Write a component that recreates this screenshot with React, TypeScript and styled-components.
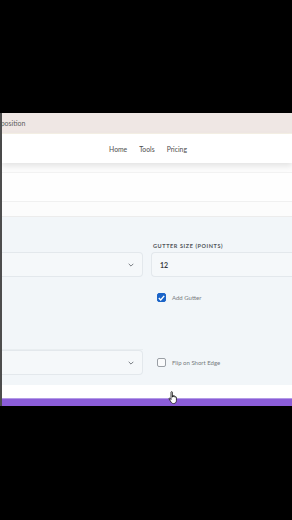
import styled, { createGlobalStyle } from "styled-components";

const GlobalStyle = createGlobalStyle`
  html, body {
    margin: 0;
    padding: 0;
    background: #000;
  }
  body {
    font-family: "Lato", "Open Sans", sans-serif;
  }
`;

const Screen = styled.div`
  width: 292px;
  height: 520px;
  background: #000;
  overflow: hidden;
  display: flex;
  flex-direction: column;
  padding-top: 113px;
  box-sizing: border-box;
`;

const Frame = styled.div`
  position: relative;
  display: flex;
  flex-direction: column;
  border-left: 2px solid #4d4d4d;
  background: #fff;
`;

const TitleStrip = styled.div`
  height: 20px;
  background: #efe7e4;
  border-bottom: 1px solid #f6f1e6;
  display: flex;
  align-items: center;
  overflow: hidden;
  font-size: 7px;
  color: #5e5e5e;
`;

const TitleText = styled.span`
  margin-left: -9px;
`;

const Header = styled.header`
  height: 29px;
  background: #fff;
  display: flex;
  justify-content: center;
  align-items: center;
  gap: 12px;
  padding-left: 2px;
  box-shadow: 0 3px 6px rgba(0, 0, 0, 0.1);
  position: relative;
  z-index: 1;
`;

const NavLink = styled.a`
  font-size: 6.8px;
  color: #4d4d4d;
  text-decoration: none;
`;

const Banner = styled.section`
  height: 54px;
  background: #fcfcfc;
  border-bottom: 1px solid #ececec;
  padding-top: 9px;
  box-sizing: border-box;
`;

const FaintBox = styled.div`
  height: 28px;
  border-top: 1px solid #f2f2f2;
  border-bottom: 1px solid #f0f0f0;
  background: #fefefe;
`;

const Panel = styled.section`
  background: #f2f6f9;
  padding: 26px 0 10px 0;
  display: grid;
  grid-template-columns: 141px 1fr;
  grid-template-rows: 9px 25px 41px 32px 25px;
  column-gap: 8px;
`;

const Label = styled.div`
  grid-column: 2;
  font-size: 5.5px;
  font-weight: 700;
  letter-spacing: 0.6px;
  color: #4f5358;
  padding-left: 2px;
`;

const Select = styled.div`
  background: #f5f8fa;
  border: 1px solid #e3e8ec;
  border-left: none;
  border-radius: 0 4px 4px 0;
  display: flex;
  justify-content: flex-end;
  align-items: center;
  padding-right: 8px;
`;

const Input = styled.div`
  background: #f5f8fa;
  border: 1px solid #e3e8ec;
  border-right: none;
  border-radius: 4px 0 0 4px;
  display: flex;
  align-items: center;
  padding-left: 8px;
  font-size: 7px;
  font-weight: 700;
  color: #3a3d41;
`;

const Spacer = styled.div``;

const CheckRow = styled.label`
  grid-column: 2;
  display: flex;
  align-items: center;
  gap: 6px;
  padding-left: 6px;
  font-size: 6px;
  color: #777b80;
`;

const Box = styled.span<{ $checked?: boolean }>`
  width: 9px;
  height: 9px;
  box-sizing: border-box;
  border-radius: 2px;
  border: 1px solid ${(p) => (p.$checked ? "#1b64c8" : "#9a9fa5")};
  background: ${(p) => (p.$checked ? "#1b64c8" : "#fafbfc")};
  display: flex;
  align-items: center;
  justify-content: center;
`;

const FaintCell = styled.div`
  border-bottom: 1px solid #e9eef1;
`;

const BottomStrip = styled.div`
  height: 13px;
  background: #fff;
`;

const Accent = styled.div`
  height: 7px;
  background: #8b5dd8;
  border-top: 1px solid #b39ae6;
`;

const Cursor = styled.svg`
  position: absolute;
  left: 166px;
  top: 278px;
`;

const Chevron = () => (
  <svg width="6" height="4" viewBox="0 0 6 4">
    <path d="M0.7 0.8 L3 3.1 L5.3 0.8" fill="none" stroke="#6c7177" strokeWidth="0.9" />
  </svg>
);

const Tick = () => (
  <svg width="7" height="6" viewBox="0 0 7 6">
    <path d="M0.8 3.1 L2.7 5 L6.2 0.9" fill="none" stroke="#fff" strokeWidth="1.4" />
  </svg>
);

function App() {
  return (
    <>
      <GlobalStyle />
      <Screen>
        <Frame>
          <TitleStrip>
            <TitleText>Imposition</TitleText>
          </TitleStrip>
          <Header>
            <NavLink>Home</NavLink>
            <NavLink>Tools</NavLink>
            <NavLink>Pricing</NavLink>
          </Header>
          <Banner>
            <FaintBox />
          </Banner>
          <Panel>
            <Label>GUTTER SIZE (POINTS)</Label>
            <Select>
              <Chevron />
            </Select>
            <Input>12</Input>
            <CheckRow>
              <Box $checked>
                <Tick />
              </Box>
              Add Gutter
            </CheckRow>
            <FaintCell />
            <Spacer />
            <Select>
              <Chevron />
            </Select>
            <CheckRow>
              <Box />
              Flip on Short Edge
            </CheckRow>
          </Panel>
          <BottomStrip />
          <Accent />
          <Cursor width="11" height="14" viewBox="0 0 11 14">
            <path
              d="M3 1.2c0-.7 1.4-.7 1.4 0v5l.1-1.2c0-.7 1.3-.7 1.3 0v1l.1-.6c0-.7 1.3-.7 1.3 0v.9c0-.6 1.2-.6 1.2 0v3.4c0 1.5-1 2.8-2.6 2.8H5.4C4.3 12.5 3.6 12 3 11L1.1 8c-.4-.6.4-1.2.9-.6L3 8.6z"
              fill="#fff"
              stroke="#111"
              strokeWidth="0.8"
            />
          </Cursor>
        </Frame>
      </Screen>
    </>
  );
}

export default App;
